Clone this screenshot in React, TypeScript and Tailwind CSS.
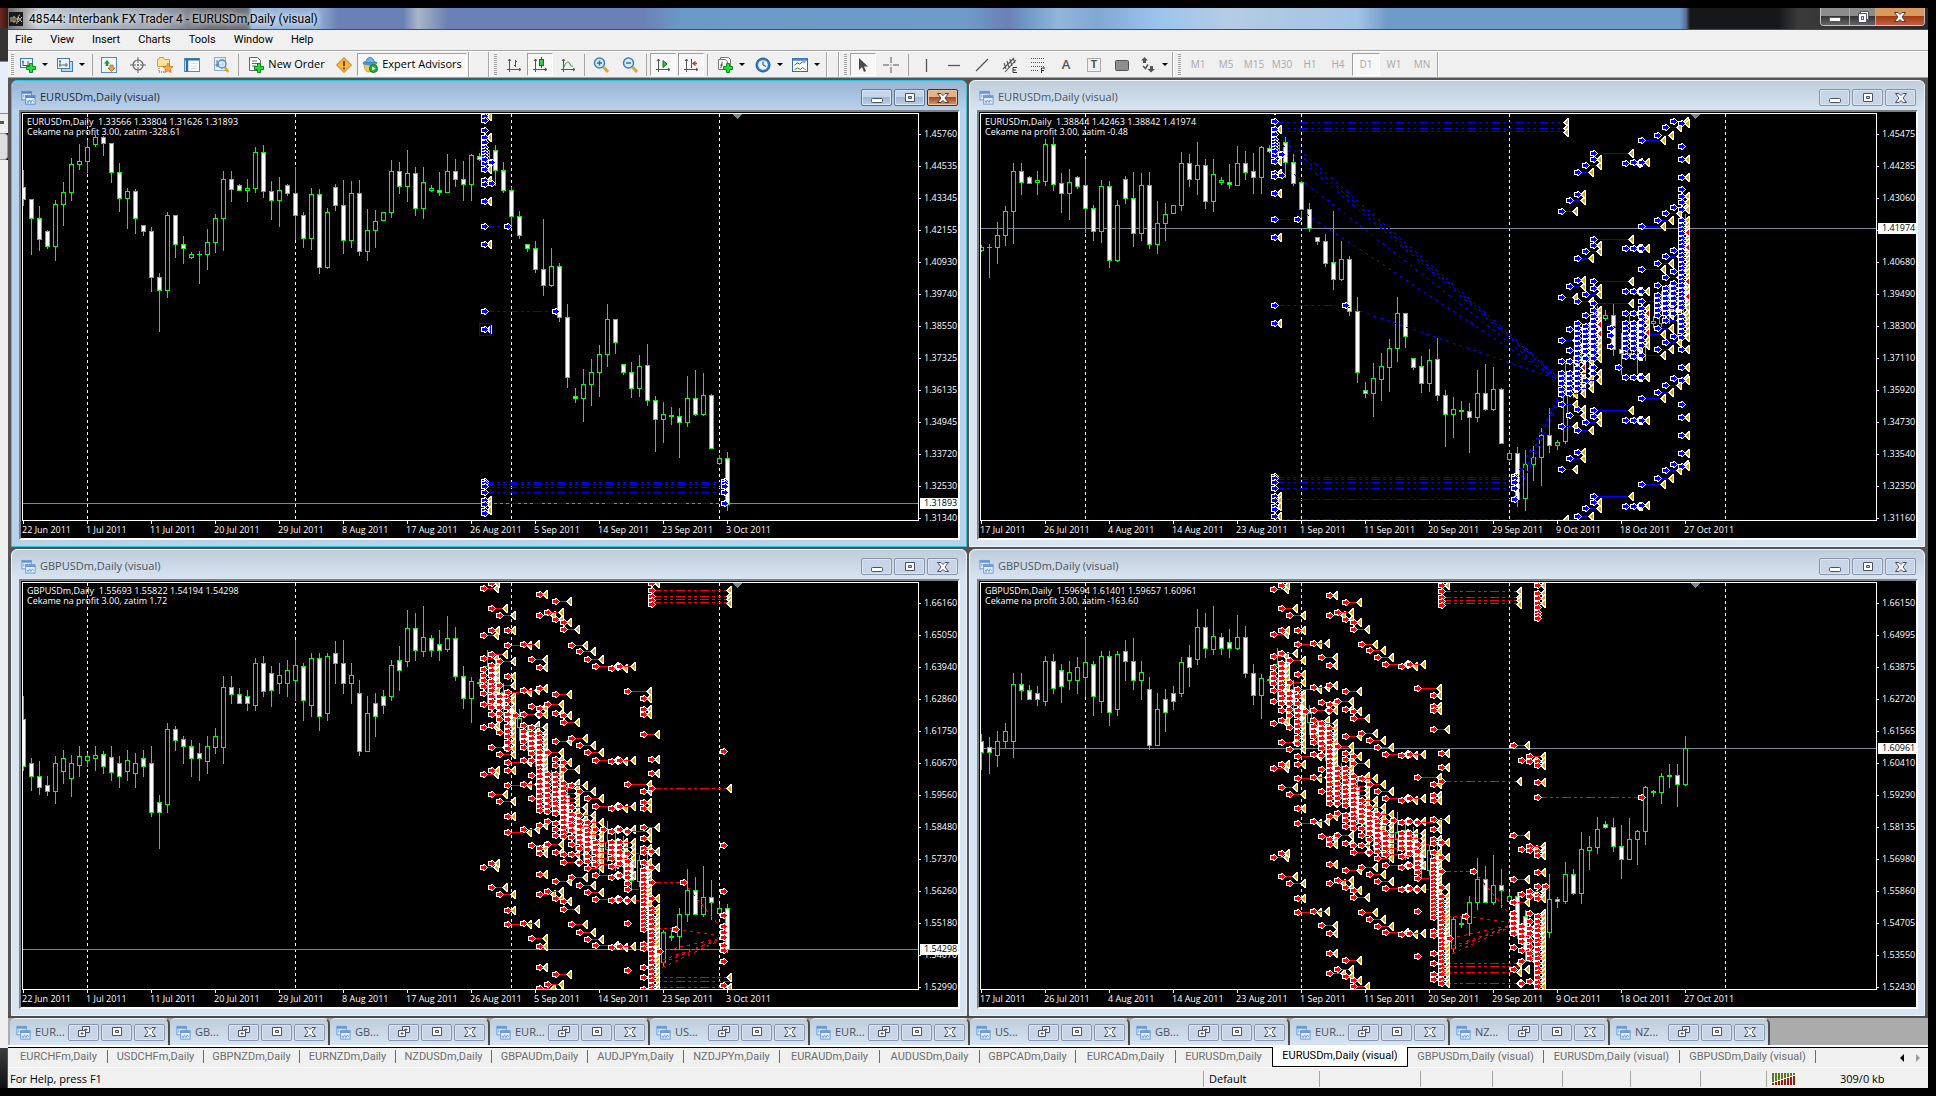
import React from "react";

type Bar = [high: number, top: number, bottom: number, low: number, filled: 0 | 1];
type Column = [x: number, ys: number[], gap: number];
type Segment = [x1: number, y1: number, x2: number, y2: number];

/* Series values are stored in thirds of a pixel. */
const SUB = 3;
const BAR_STEP = 24;

const EUR: Bar[] = [
  [180, 231, 269, 287, 1], [268, 268, 325, 434, 1], [289, 325, 389, 422, 1], [360, 364, 410, 416, 1],
  [270, 283, 410, 452, 0], [216, 247, 284, 345, 0], [144, 163, 248, 272, 0], [102, 154, 164, 177, 0],
  [90, 112, 155, 186, 0], [75, 82, 104, 110, 0], [78, 82, 101, 137, 1], [100, 100, 188, 218, 1],
  [159, 187, 266, 305, 1], [235, 244, 266, 356, 0], [237, 244, 325, 371, 1], [346, 346, 365, 377, 1],
  [351, 364, 503, 545, 1], [489, 502, 542, 665, 1], [306, 316, 542, 563, 0], [316, 316, 404, 443, 1],
  [379, 403, 416, 461, 1], [426, 433, 443, 446, 0], [424, 433, 433, 521, 0], [358, 397, 434, 479, 0],
  [312, 325, 398, 428, 0], [183, 208, 326, 422, 0], [183, 208, 239, 275, 1], [222, 226, 242, 242, 1],
  [207, 235, 241, 275, 0], [111, 127, 236, 248, 0], [105, 127, 245, 263, 1], [213, 244, 272, 329, 1],
  [201, 241, 272, 350, 0], [222, 226, 251, 257, 1], [171, 250, 317, 387, 1], [307, 316, 386, 413, 1],
  [235, 253, 386, 419, 0], [238, 253, 473, 491, 1], [294, 307, 473, 476, 0], [223, 232, 287, 302, 1],
  [210, 286, 392, 431, 1], [213, 250, 392, 413, 0], [210, 250, 425, 437, 1], [297, 361, 425, 452, 0],
  [301, 334, 362, 413, 0], [307, 307, 332, 332, 0], [150, 184, 308, 323, 0], [156, 184, 230, 251, 1],
  [120, 190, 230, 275, 0], [172, 190, 296, 317, 1], [171, 217, 296, 326, 0], [226, 235, 241, 245, 0],
  [186, 241, 247, 257, 1], [132, 184, 248, 248, 0], [148, 184, 209, 230, 1], [153, 208, 224, 272, 1],
  [132, 136, 224, 272, 0], [130, 139, 149, 152, 1], [118, 122, 155, 160, 0], [105, 121, 182, 226, 1],
  [157, 181, 242, 248, 1], [231, 241, 320, 345, 1], [303, 319, 377, 386, 1], [403, 403, 416, 425, 1],
  [393, 415, 479, 488, 1], [327, 478, 527, 557, 1], [414, 469, 527, 530, 0], [459, 469, 623, 635, 1],
  [582, 622, 803, 833, 1], [834, 858, 865, 878, 1], [777, 823, 866, 935, 0], [747, 787, 824, 887, 0],
  [706, 733, 788, 860, 0], [582, 628, 734, 770, 0], [628, 628, 698, 731, 1], [763, 763, 788, 794, 1],
  [756, 787, 836, 863, 1], [735, 769, 836, 860, 0], [702, 766, 872, 887, 1], [858, 871, 929, 1025, 1],
  [877, 913, 929, 998, 0], [891, 916, 919, 944, 0], [895, 919, 938, 1043, 1], [798, 865, 938, 950, 0],
  [780, 865, 914, 917, 1], [789, 856, 914, 917, 0], [853, 856, 1016, 1016, 1], [1036, 1045, 1061, 1064, 0],
  [1026, 1045, 1182, 1202, 1],
];

const EUR_OCT: Bar[] = [
  [1020, 1063, 1165, 1202, 0], [1010, 1043, 1063, 1110, 0], [955, 977, 1043, 1125, 0], [894, 976, 1007, 1028, 1],
  [992, 997, 1007, 1017, 0], [760, 850, 995, 1001, 0], [740, 790, 850, 862, 0], [700, 740, 790, 850, 0],
  [640, 700, 740, 770, 0], [590, 610, 700, 730, 0], [602, 616, 625, 631, 0], [582, 616, 718, 737, 1],
  [670, 718, 731, 794, 1], [618, 640, 731, 740, 0], [650, 660, 700, 791, 0], [610, 640, 700, 750, 0],
  [620, 635, 640, 652, 0], [545, 600, 640, 650, 0], [530, 560, 600, 640, 0], [560, 595, 607, 680, 1],
  [312, 355, 608, 640, 0],
];

const GBP: Bar[] = [
  [440, 509, 650, 660, 1], [625, 640, 680, 720, 1], [635, 680, 713, 732, 1], [680, 705, 725, 735, 1],
  [620, 640, 725, 760, 0], [600, 625, 665, 700, 0], [615, 640, 685, 740, 0], [590, 618, 645, 680, 0],
  [610, 618, 632, 650, 0], [590, 615, 625, 660, 0], [605, 612, 650, 670, 1], [590, 622, 668, 690, 1],
  [620, 640, 680, 712, 1], [600, 630, 665, 690, 0], [610, 640, 670, 712, 0], [600, 625, 650, 680, 1],
  [590, 640, 787, 800, 1], [735, 757, 787, 895, 1], [520, 538, 762, 787, 0], [530, 538, 570, 600, 1],
  [560, 568, 590, 640, 1], [570, 590, 625, 680, 1], [580, 610, 625, 690, 1], [560, 590, 635, 670, 0],
  [535, 560, 592, 610, 0], [380, 412, 592, 640, 0], [380, 412, 432, 460, 1], [415, 432, 460, 460, 1],
  [420, 440, 460, 480, 1], [325, 340, 465, 480, 0], [320, 340, 425, 440, 1], [350, 370, 420, 470, 1],
  [340, 375, 400, 430, 0], [330, 360, 400, 440, 0], [270, 345, 390, 450, 0], [340, 350, 450, 510, 1],
  [310, 325, 465, 500, 0], [310, 325, 500, 540, 1], [310, 320, 490, 510, 0], [275, 310, 340, 400, 1],
  [270, 340, 400, 430, 1], [340, 375, 400, 460, 0], [390, 430, 604, 615, 1], [440, 490, 604, 604, 0],
  [430, 460, 500, 560, 1], [420, 440, 465, 490, 1], [330, 345, 440, 450, 0], [290, 330, 360, 420, 1],
  [180, 235, 335, 350, 0], [190, 235, 300, 330, 1], [170, 262, 305, 320, 0], [255, 265, 300, 320, 1],
  [240, 283, 300, 330, 1], [198, 265, 299, 303, 0], [231, 265, 380, 392, 1], [350, 379, 446, 474, 1],
  [381, 394, 446, 518, 0], [388, 396, 399, 410, 0], [300, 350, 398, 460, 0], [330, 350, 400, 470, 1],
  [400, 428, 470, 500, 1], [460, 470, 530, 560, 1], [478, 505, 532, 570, 0], [530, 540, 570, 600, 1],
  [530, 560, 600, 650, 1], [570, 600, 720, 760, 1], [660, 700, 730, 770, 0], [650, 720, 750, 790, 1],
  [700, 735, 830, 850, 1], [800, 830, 850, 900, 1], [820, 835, 880, 930, 1], [830, 850, 900, 950, 1],
  [860, 890, 930, 970, 1], [813, 877, 898, 935, 0], [840, 870, 920, 960, 1], [860, 900, 940, 980, 1],
  [915, 940, 990, 1020, 1], [915, 932, 995, 1010, 0], [910, 945, 1080, 1200, 1], [1100, 1180, 1240, 1280, 1],
  [1142, 1147, 1238, 1248, 0], [1140, 1159, 1162, 1172, 0], [1075, 1093, 1160, 1198, 0], [957, 1021, 1094, 1115, 0],
  [981, 1021, 1094, 1094, 1], [948, 1042, 1094, 1100, 0], [990, 1042, 1057, 1109, 1], [1062, 1076, 1090, 1090, 0],
  [1062, 1075, 1198, 1208, 1],
];

const GBP_OCT: Bar[] = [
  [1080, 1100, 1200, 1230, 1], [1150, 1160, 1200, 1230, 0], [1090, 1127, 1160, 1200, 0], [972, 1048, 1148, 1163, 0],
  [1042, 1048, 1054, 1073, 1], [936, 973, 1055, 1060, 0], [957, 973, 1031, 1034, 1], [846, 898, 1031, 1061, 0],
  [858, 892, 902, 959, 0], [801, 838, 892, 911, 0], [813, 823, 832, 836, 1], [804, 832, 890, 905, 1],
  [825, 889, 929, 986, 1], [804, 868, 929, 929, 0], [840, 844, 868, 944, 0], [708, 712, 845, 884, 0],
  [720, 724, 727, 738, 0], [670, 679, 727, 761, 0], [642, 676, 679, 713, 0], [642, 676, 704, 770, 1],
  [558, 596, 704, 707, 0],
];

const range = (from: number, to: number, step: number) =>
  Array.from({ length: Math.floor((to - from) / step) + 1 }, (_, i) => from + i * step);

const scaleBars = (bars: Bar[], k: number, c: number): Bar[] =>
  bars.map(([h, t, b, l, f]) => [h * k + c, t * k + c, b * k + c, l * k + c, f]);
const moveColumns = (cols: Column[], dx: number, k = 1, c = 0): Column[] =>
  cols.map(([x, ys, gap]) => [x + dx, ys.map((y) => y * k + c), gap]);
const moveSegments = (segs: Segment[], dx: number, k = 1, c = 0): Segment[] =>
  segs.map(([x1, y1, x2, y2]) => [x1 + dx, y1 * k + c, x2 + dx, y2 * k + c]);

/* EURUSD orders. A gap of 0 is an entry with no exit mark. */
const EUR_ORDERS: Column[] = [
  [1386, [20, 82, 161, 178, 212, 274, 403, 658, 1172, 1183, 1201], 13],
  [1386, [30, 60, 98, 113, 122, 131, 140, 149, 222, 349, 604, 1113, 1120, 1130, 1147, 1210], 0],
  [1409, [157, 220], 0],
  [1457, [349], 0],
  [1601, [604], 0],
  [2106, [1113, 1120, 1130, 1147, 1180], 0],
];
const EUR_LINKS: Segment[] = [
  [1386, 349, 1457, 349], [1386, 604, 1601, 604], [1386, 1117, 2106, 1117], [1386, 1123, 2106, 1123],
  [1386, 1132, 2106, 1132], [1386, 1147, 2106, 1147], [1386, 1180, 2106, 1180],
];
const EUR_OCT_ORDERS: Column[] = moveColumns([
  [336, [304, 562, 691, 754, 790, 805, 820, 838, 853, 883, 949, 1078], 40],
  [360, [271, 529, 658, 721, 754, 790, 805, 820, 835, 850, 916, 1045], 40],
  [384, [187, 445, 574, 640, 670, 685, 700, 715, 730, 754, 775, 790, 805, 820, 835, 961, 1219], 40],
  [384, [253, 511, 655, 745, 898, 1027], 15],
  [408, [166, 424, 553, 616, 650, 665, 680, 695, 710, 725, 745, 811, 937, 1195], 40],
  [432, [148, 407, 535, 600, 620, 635, 650, 665, 680, 695, 710, 727, 745, 790, 919, 1177], 15],
  [432, [130, 388, 514, 580, 901, 1159], 112],
  [432, [772], 0],
  [508, [772], 0],
  [483, [655, 675, 709], 0],
  [528, [160, 415, 544, 610, 640, 655, 670, 685, 700, 715, 740, 802, 931, 1189], 38],
  [552, [157, 415, 544, 610, 640, 655, 670, 685, 700, 715, 740, 802, 931, 1189], 18],
  [576, [91, 349, 478, 574, 736, 865, 1123, 672], 64],
  [576, [157, 415, 544, 595, 610, 620, 637, 655, 690, 705, 802, 931, 1186], 16],
  [624, [76, 331, 460, 525, 555, 570, 585, 600, 615, 655, 718, 847, 1105], 40],
  [648, [52, 310, 439, 502, 535, 550, 565, 580, 595, 610, 630, 697, 826, 1081], 40],
  [672, [34, 292, 421, 484, 520, 535, 550, 565, 580, 610, 679, 805, 1063], 38],
  [696, [109, 238, 883], 0],
  [696, [40, 148, 202, 259, 277, 298, ...range(332, 604, 13), 618, 634, 650, 664, 682, 718, 772, 811, 922, 976, 1030, 1069], 15],
], 1407);
const EUR_OCT_EXITS: Column = [1757, [38, 56, 67, 1228], 0];
const EUR_OCT_LINKS: Segment[] = [
  [882, 38, 1757, 38], [882, 56, 1757, 56], [882, 64, 1757, 64], [882, 1228, 1757, 1228],
  [907, 75, 1731, 800], [907, 90, 1731, 803], [907, 105, 1731, 806],
  [907, 165, 1731, 810], [960, 300, 1731, 812], [1100, 588, 1731, 808],
  [1605, 1100, 1740, 850], [1605, 1120, 1745, 848], [1605, 1140, 1740, 845], [1605, 1165, 1740, 860], [1880, 640, 1930, 665],
];
/* Exits closed by stop, drawn in red over the entry columns. */
const EUR_OCT_STOPS: Column[] = moveColumns([
  [350, [823], 0], [375, [787], 0], [399, [706, 772], 0], [424, [682, 697], 0], [448, [643, 670], 0],
  [544, [676, 688], 0], [568, [672], 0], [592, [610, 668], 0], [640, [592], 0], [662, [568], 0], [687, [550], 0],
  [711, [368, 412, 514, 560], 0],
], 1407);

const GBP_ORDERS: Column[] = moveColumns([
  [103, [118, 253, 319, 352, 370, 384, 400, 421, 453, 519, 655, 922], 36],
  [127, [105, 240, 340, 355, 370, 385, 400, 412, 430, 445, 460, 480, 512, 643, 910], 14],
  [127, [175, 309, 577, 712, 979], 38],
  [151, [196, 330, 397, 430, 445, 460, 478, 497, 532, 597, 733, 999], 38],
  [175, [240, 373, 440, 460, 480, 497, 515, 530, 545, 562, 580, 643, 775, 1045], 14],
  [175, [283, 417, 619, 685, 820, 1087], 62],
  [199, [485], 0],
  [223, [280, 412, 481, 512, 530, 545, 560, 577, 613, 682, 814, 1084], 38],
  [247, [322, 457, 520, 535, 550, 565, 580, 595, 615, 658, 723, 859, 1126], 38],
  [271, [135, 346, 406, 463, 481, ...range(535, 767, 14), 800, 868, 883, 943, 1150, 1210], 14],
  [271, [196, 999, 1270], 38],
  [295, [187, 454, 590, 655, 670, 685, 700, 715, 730, 745, 760, 790, 856, 991, 1258], 38],
  [319, [157, 424, 559, 961, 1231], 38],
  [319, [208, 478, 610, 628, ...range(655, 775, 14), 795, 812, 829, 880, 1012, 1280], 14],
  [343, [217, 484, 620, 1021, 1290], 14],
  [343, [238, 505, 640, ...range(680, 843, 14), 885, 907, 1042, 1308], 38],
  [367, [283, 550, 685, 750, 770, 785, 800, 815, 835, 855, 886, 952, 1087], 38],
  [391, [301, 571, 704, 772, 790, 805, 820, 835, 850, 868, 907, 973, 1108], 38],
  [415, [322, 592, 724, 793, 815, 827, 840, 855, 870, 890, 905, 925, 994, 1129], 38],
  [439, [343, 613, 745, 814, 850, 865, 880, 895, 912, 946, 1015, 1147], 60],
  [463, [812], 0],
  [487, [349, 616, 751, 817, 850, 865, 880, 895, 918, 952, 1018, 1153], 38],
  [511, [343, 613, 745, 814, 850, 865, 880, 895, 910, 946, 1015, 1150], 38],
  [535, [415, 682, 817], 62],
  [535, [883, 905, 925, 940, 952, 967, 985, 1018, 1084, 1219], 0],
  [583, [436, 468, 480, 703, 736, 752, 838, 868, 880, 907, 930, ...range(946, 1110, 12), 1144, 1156, 1210, 1240, 1273, 1287], 14],
  [583, [538, 808], 38],
  [607, [105, 610, 652, 877, 922, 1012, 1099, ...range(1040, 1300, 13)], 14],
  [607, [124, 142, 153, 165, 694, 964], 0],
  [631, [1165], 0],
  [679, [1100], 0],
  [703, [964], 0],
], 777);
const GBP_EXITS: Column = [1615, [124, 142, 151, 162, 694, 1240, 1267, 1300], 0];
const GBP_LINKS: Segment[] = moveSegments([
  [607, 124, 838, 124], [607, 142, 838, 142], [607, 151, 838, 151], [607, 160, 838, 160],
  [607, 694, 838, 694], [607, 964, 703, 964], [607, 1099, 679, 1099], [607, 1240, 838, 1240],
  [607, 1249, 838, 1249], [607, 1267, 838, 1267], [607, 1300, 838, 1300],
  [679, 1100, 808, 1118], [703, 964, 808, 1090], [631, 1165, 808, 1126], [620, 1195, 808, 1128],
  [620, 1205, 808, 1130], [620, 1218, 808, 1132], [540, 883, 583, 883], [540, 985, 583, 985], [540, 1018, 583, 1018],
], 777);
const GBP_OCT_ORDERS: Column[] = moveColumns([
  [823, [586, 856, 988, 1057, 1258], 38],
  [823, [1090, 1105, 1120, 1135, 1150, 1192], 0],
  [847, [631, 898, 1033, 1130, 1145, 1160, 1175, 1200, 1234, 1300], 38],
  [871, [618, 634, 888, 901, 1024, 1040, 1090, 1115, 1135, 1150, 1170, 1190, 1210, 1225, 1295], 38],
  [895, [106, 130, 145, 160, 634, 645, 697, 904, 916, 967, 1035, 1045, ...range(1100, 1310, 14)], 14],
  [895, [172, 187, 196, 206, 742, 1009], 0],
  [919, [1009], 0],
  [1207, [742], 0],
], 777);

type ChartData = {
  id: string;
  symbol: string;
  quote: string;
  note: string;
  bars: Bar[];
  origin: number;
  months: number[];
  bid: number;
  price: string;
  prices: string[];
  dates: string[];
  orders: Column[];
  exits: Column[];
  stops?: Column[];
  links: Segment[];
  tone: "blue" | "red";
  selection?: { x: number; y: number };
};

const DATES_A = ["22 Jun 2011", "1 Jul 2011", "11 Jul 2011", "20 Jul 2011", "29 Jul 2011", "8 Aug 2011", "17 Aug 2011", "26 Aug 2011", "5 Sep 2011", "14 Sep 2011", "23 Sep 2011", "3 Oct 2011"];
const DATES_B = ["17 Jul 2011", "26 Jul 2011", "4 Aug 2011", "14 Aug 2011", "23 Aug 2011", "1 Sep 2011", "11 Sep 2011", "20 Sep 2011", "29 Sep 2011", "9 Oct 2011", "18 Oct 2011", "27 Oct 2011"];

const CHARTS: ChartData[] = [
  {
    id: "eur-a", symbol: "EURUSDm,Daily", quote: "1.33566 1.33804 1.31626 1.31893", note: "Cekame na profit 3.00, zatim -328.61",
    bars: EUR, origin: 12, months: [8, 34, 61, 87], bid: 1180, price: "1.31893",
    prices: ["1.45760", "1.44535", "1.43345", "1.42155", "1.40930", "1.39740", "1.38550", "1.37325", "1.36135", "1.34945", "1.33720", "1.32530", "1.31340"],
    dates: DATES_A, orders: EUR_ORDERS, exits: [], links: EUR_LINKS, tone: "blue", selection: { x: 1368, y: 640 },
  },
  {
    id: "eur-b", symbol: "EURUSDm,Daily", quote: "1.38844 1.42463 1.38842 1.41974", note: "Cekame na profit 3.00, zatim -0.48",
    bars: [...scaleBars(EUR.slice(21), 1.0105, -25), ...EUR_OCT], origin: 12, months: [13, 40, 66, 93], bid: 355, price: "1.41974",
    prices: ["1.45475", "1.44285", "1.43060", "", "1.40680", "1.39490", "1.38300", "1.37110", "1.35920", "1.34730", "1.33540", "1.32350", "1.31160"],
    dates: DATES_B, orders: [...moveColumns(EUR_ORDERS, -504, 1.0105, -25), [882, [1219], 13], ...EUR_OCT_ORDERS], exits: [EUR_OCT_EXITS],
    stops: EUR_OCT_STOPS,
    links: [...moveSegments(EUR_LINKS, -504, 1.0105, -25), ...EUR_OCT_LINKS], tone: "blue",
  },
  {
    id: "gbp-a", symbol: "GBPUSDm,Daily", quote: "1.55693 1.55822 1.54194 1.54298", note: "Cekame na profit 3.00, zatim 1.72",
    bars: GBP, origin: 99, months: [8, 34, 61, 87], bid: 1198, price: "1.54298",
    prices: ["1.66160", "1.65050", "1.63940", "1.62860", "1.61750", "1.60670", "1.59560", "1.58480", "1.57370", "1.56260", "1.55180", "1.54070", "1.52990"],
    dates: DATES_A,
    orders: [...moveColumns(GBP_ORDERS, 504, 1.0417, -8), [2104, [604, 886, 1024, 1096, 1130, 1147, 1162, 1185, 1201, 1234, 1306], 0]],
    exits: moveColumns([GBP_EXITS], 504, 1.0417, -8), links: moveSegments(GBP_LINKS, 504, 1.0417, -8), tone: "red",
  },
  {
    id: "gbp-b", symbol: "GBPUSDm,Daily", quote: "1.59694 1.61401 1.59657 1.60961", note: "Cekame na profit 3.00, zatim -163.60",
    bars: [...scaleBars(GBP.slice(21), 0.96, 7), ...GBP_OCT], origin: 99, months: [13, 40, 66, 93], bid: 596, price: "1.60961",
    prices: ["1.66150", "1.64995", "1.63875", "1.62720", "1.61565", "1.60410", "1.59290", "1.58135", "1.56980", "1.55860", "1.54705", "1.53550", "1.52430"],
    dates: DATES_B, orders: [...GBP_ORDERS, ...GBP_OCT_ORDERS], exits: [GBP_EXITS],
    links: [...GBP_LINKS, [1672, 742, 1984, 742]], tone: "red",
  },
];

const ExitMark = ({ x, y, fill = "#daa520" }: { x: number; y: number; fill?: string }) => (
  <path
    transform={`translate(${x} ${y})`}
    d="M-1.5 .5 2-3V4Z"
    fill={fill}
    stroke="#fff"
    strokeWidth={2}
    paintOrder="stroke"
    strokeLinejoin="round"
  />
);

const Plot = ({ chart }: { chart: ChartData }) => {
  const px = (v: number) => Math.floor(v / SUB);
  const y = (v: number) => px(v - chart.origin);
  const color = chart.tone === "blue" ? "#0000ff" : "#ff0000";
  return (
    <svg className="block h-[406px] w-full" shapeRendering="crispEdges" role="img" aria-label={`${chart.symbol} candlestick chart`}>
      {chart.months.map((m) => (
        <line key={m} x1={m * 8 + 0.5} x2={m * 8 + 0.5} y1={0} y2={406} stroke="#fff" strokeDasharray="3 3" />
      ))}
      <rect x={0} y={y(chart.bid)} width="100%" height={1} fill="#778899" />
      {chart.bars.map(([h, t, b, l, filled], i) => {
        const x = (i * BAR_STEP) / SUB;
        const top = y(t);
        const height = y(b) - top + 1;
        return (
          <g key={i}>
            <rect x={x} y={y(h)} width={1} height={y(l) - y(h) + 1} fill="#00ff00" />
            <rect x={x - 2} y={top} width={5} height={height} fill="#00ff00" />
            {height > 2 && <rect x={x - 1} y={top + 1} width={3} height={height - 2} fill={filled ? "#fff" : "#000"} />}
          </g>
        );
      })}
      {chart.links.map(([x1, y1, x2, y2], i) => (
        <line key={i} x1={px(x1)} y1={y(y1) + 0.5} x2={px(x2)} y2={y(y2) + 0.5} stroke={color} strokeDasharray={y1 === y2 ? "9 3 3 3 3 3" : "3 4"} />
      ))}
      {chart.orders.map(([x, ys, gap], i) => (
        <g key={i}>
          {gap > 15 && ys.map((v, k) => <rect key={k} x={px(x)} y={y(v)} width={px(gap)} height={1} fill={color} />)}
          {gap > 0 && ys.map((v, k) => <ExitMark key={k} x={px(x + gap)} y={y(v)} />)}
        </g>
      ))}
      {chart.exits.map(([x, ys], i) => (
        <g key={i}>{ys.map((v, k) => <ExitMark key={k} x={px(x)} y={y(v)} />)}</g>
      ))}
      {chart.stops?.map(([x, ys], i) => (
        <g key={i}>{ys.map((v, k) => <ExitMark key={k} x={px(x)} y={y(v)} fill="#ff0000" />)}</g>
      ))}
      {chart.orders.map(([x, ys], i) => (
        <g key={i}>
          {ys.map((v, k) => (
            <path
              key={k}
              transform={`translate(${px(x)} ${y(v)})`}
              d="M-3-1H0V-2L3 .5 0 3V2H-3Z"
              fill={color}
              stroke="#fff"
              strokeWidth={2}
              paintOrder="stroke"
              strokeLinejoin="round"
            />
          ))}
        </g>
      ))}
      {chart.selection && (
        <rect x={px(chart.selection.x) + 0.5} y={y(chart.selection.y) + 0.5} width={11} height={12} fill="none" stroke={color} />
      )}
      <path d="M710 0H719L714.500 5Z" fill="#778899" />
    </svg>
  );
};

const ChartIcon = ({ dim = false }: { dim?: boolean }) => (
  <svg viewBox="0 0 16 16" className={dim ? "size-[15px] shrink-0 opacity-80" : "size-[15px] shrink-0"} fill="none">
    <rect x="1" y="1.500" width="10" height="9" fill="#f4f9ff" stroke="#4c86d6" />
    <path d="M1 3h10" stroke="#4c86d6" strokeWidth="2" />
    <path d="M3 8V5m2 3V5.500M7 7V5m2 2V5" stroke="#4c86d6" />
    <rect x="5" y="6" width="10" height="9" fill="#f4f9ff" stroke="#4c86d6" />
    <path d="M5 7.500h10" stroke="#4c86d6" strokeWidth="2" />
    <path d="M6.500 11.500l1 2 1.500-3 1.500 3 1.500-3 1.500 2" stroke="#4c86d6" />
  </svg>
);

type Glyph = "min" | "max" | "restore" | "close" | "cascade";
const WindowGlyph = ({ kind, active = false }: { kind: Glyph; active?: boolean }) => (
  <svg viewBox="0 0 12 12" className="size-3" fill="#fff" stroke={active ? "#4f3a3a" : "#4a5263"}>
    {kind === "min" && <rect x=".5" y="6.500" width="11" height="4" rx="1" />}
    {kind === "max" && <path d="M1.500 1.500h9v8h-9zM4.500 4.500v2h3v-2z" fillRule="evenodd" />}
    {kind === "restore" && (
      <>
        <path d="M4.500.500h7v6h-7zM7 3v1h2V3z" fillRule="evenodd" />
        <path d="M.500 4.500h7v6h-7zM3 7v1h2V7z" fillRule="evenodd" />
      </>
    )}
    {kind === "cascade" && (
      <>
        <path d="M3.500.500h8v8h-8z" />
        <path d="M1.500 2.500h8v9h-8zM4.500 5.500v3h2v-3z" fillRule="evenodd" />
      </>
    )}
    {kind === "close" && <path d="M.500 1.500h3.500l2 2 2-2h3.500L8 6l3.500 4.500H8l-2-2-2 2H.500L4 6z" />}
  </svg>
);

const WindowButton = ({ kind, variant = "idle" }: { kind: Glyph; variant?: "idle" | "active" | "danger" }) => {
  const tone = {
    idle: "border-[#8694ad] bg-[#c8d5e6] shadow-[inset_0_0_0_1px_#dbe5f1]",
    active: "border-[#5f7393] bg-[linear-gradient(#c5d5ea_0_45%,#9fb8d6_50%,#b9cfe8)] shadow-[inset_0_0_0_1px_#dbe7f5]",
    danger: "border-[#4f2a26] bg-[linear-gradient(#e0b389_0_45%,#a8432c_50%,#d89a6c)] shadow-[inset_0_0_0_1px_#e8c6a4]",
  }[variant];
  return (
    <button type="button" aria-label={kind} className={`flex h-[17px] w-[31px] items-center justify-center rounded-[2px] border ${tone}`}>
      <WindowGlyph kind={kind} active={variant === "danger"} />
    </button>
  );
};

const ChartWindow = ({ chart, active = false }: { chart: ChartData; active?: boolean }) => (
  <section
    className={
      active
        ? "rounded-t-md border border-[#38c4e0] bg-[#b9d1ea] pr-[6px] pb-[6px] pl-[7px]"
        : "rounded-t-md border border-[#eef3f9] bg-[#d7e4f2] pr-[6px] pb-[6px] pl-[7px]"
    }
  >
    <header
      className={
        active
          ? "-mr-[6px] -ml-[7px] flex h-[29px] items-center rounded-t-md bg-[linear-gradient(#98b4d2,#b9d1ea)] pt-1 pr-2 pl-[9px] text-[#1c2b3a]"
          : "-mr-[6px] -ml-[7px] flex h-[29px] items-center rounded-t-md bg-[linear-gradient(#bfcddb,#d7e4f2)] pt-1 pr-2 pl-[9px] text-[#4a5561]"
      }
    >
      <ChartIcon dim={!active} />
      <h2 className="ml-1 grow text-[11px]">{chart.symbol} (visual)</h2>
      <div className="flex gap-[2px]">
        <WindowButton kind="min" variant={active ? "active" : "idle"} />
        <WindowButton kind="max" variant={active ? "active" : "idle"} />
        <WindowButton kind="close" variant={active ? "danger" : "idle"} />
      </div>
    </header>
    <div className="border-2 border-t-[#808080] border-r-white border-b-white border-l-[#808080] bg-black pt-px pl-px text-[9px] leading-[10px] text-white">
      <div className="flex h-[408px]">
        <div className="relative min-w-0 grow overflow-hidden border border-white">
          <Plot chart={chart} />
          <div className="absolute top-[3px] left-1 whitespace-pre">
            <p>{chart.symbol}{"  "}{chart.quote}</p>
            <p>{chart.note}</p>
          </div>
        </div>
        <div className="relative w-[39px] shrink-0 pt-[5px]">
          {chart.prices.map((p, i) => (
            <div key={i} className="flex h-8 items-center gap-[3px] before:h-px before:w-[2px] before:bg-white">{p}</div>
          ))}
          <div
            className="absolute right-0 left-px h-[11px] bg-white pl-1 text-black"
            style={{ top: Math.floor((chart.bid - chart.origin) / SUB) - 4 }}
          >
            {chart.price}
          </div>
        </div>
      </div>
      <div className="flex h-[17px]">
        {chart.dates.map((d) => (
          <div key={d} className="w-16 shrink-0 whitespace-nowrap before:mb-px before:ml-px before:block before:h-[3px] before:w-px before:bg-white">
            {d}
          </div>
        ))}
      </div>
    </div>
  </section>
);

const MINIMIZED = ["EUR...", "GB...", "GB...", "EUR...", "US...", "EUR...", "US...", "GB...", "EUR...", "NZ...", "NZ..."];

const Plus = ({ x = 7, y = 7 }: { x?: number; y?: number }) => (
  <path transform={`translate(${x} ${y})`} d="M3.500.500h3v3h3v3h-3v3h-3v-3h-3v-3h3z" fill="#22e03a" stroke="#0a8a18" />
);

const ICONS: Record<string, React.ReactNode> = {
  newChart: (<><rect x=".5" y="1.500" width="12" height="9" fill="#eaf4fd" stroke="#3f7db8" /><path d="M3 3.500v5h8M2 5h2M8 4v5" stroke="#555" fill="none" /><Plus x={6} y={6} /></>),
  profiles: (<><rect x="4.500" y="4.500" width="11" height="10" fill="#b9d7f3" stroke="#3f7db8" /><rect x=".5" y="1.500" width="12" height="10" fill="#eaf4fd" stroke="#3f7db8" /><path d="M3 3v7M2 8h9M9 6v4M2 4.500h2" stroke="#666" fill="none" /></>),
  market: (<><rect x=".5" y=".5" width="15" height="15" fill="#f2f8fe" stroke="#4f8cc6" /><path d="M3 6.500 6 3l3 3.500H7.300V9H4.700V6.500z" fill="#1a9a28" /><path d="M7 11h2V8h3v3h2l-3.500 3.500z" fill="#f0a03c" stroke="#9a5510" strokeWidth=".6" /></>),
  target: (<><circle cx="8" cy="8" r="5" fill="none" stroke="#666" strokeWidth="1.200" /><path d="M8 0v6M8 10v6M0 8h6M10 8h6M8 7v2M7 8h2" stroke="#666" /></>),
  folder: (<><path d="M.500 9.500v-7h1l1-2h4l1 2h5v7z" fill="#fbe29a" stroke="#d69c2c" /><path d="M2 11v4h5" stroke="#555" strokeDasharray="1 1" fill="none" /><path d="m11 6 1.500 3.200 3.500.400-2.500 2.400.700 3.500-3.200-1.700-3.200 1.700.700-3.500L6 9.600l3.500-.400z" fill="#f7a94a" stroke="#b96a1a" strokeWidth=".700" /></>),
  terminal: (<><rect x=".5" y="1.500" width="15" height="13" fill="#fff" stroke="#4f8cc6" /><path d="M1 2.500h14" stroke="#2f6ca8" strokeWidth="2" /><path d="M3 3v12" stroke="#2f6ca8" strokeWidth="2.500" /><path d="M7 6.500h6M7 9h6M7 11.500h6" stroke="#cde" /></>),
  tester: (<><rect x="1.500" y=".5" width="11" height="13" fill="#e6f0fa" stroke="#8aa8c8" /><path d="M4 3v7M2.500 8h8M10 4v5" stroke="#667" /><circle cx="9" cy="7" r="4" fill="#cfe6fb" fillOpacity=".8" stroke="#4b86c0" strokeWidth="1.300" /><path d="m12 10.500 3.500 4.500" stroke="#e0a030" strokeWidth="2.500" /></>),
  order: (<><path d="M1.500.500h8l3 3v10h-11z" fill="#fff" stroke="#666" /><path d="M4 4h5M4 6.500h6M4 9h4" stroke="#666" /><Plus x={6} y={6} /></>),
  alert: (<><path d="M8 .500 15.500 8 8 15.500.500 8z" fill="#f6b53c" stroke="#c07a18" /><path d="M8 4v5M8 10.500v2" stroke="#6a3a08" strokeWidth="1.800" /></>),
  expert: (<><path d="M2 7c0 5 2 8 5 8s5-3 5-8z" fill="#f4c65a" stroke="#b8861c" strokeWidth=".700" /><ellipse cx="8" cy="6" rx="7.500" ry="2.500" fill="#4a94cf" /><path d="M4 5.500C4 2 5.500.500 8 .500S12 2 12 5.500z" fill="#6db3e6" stroke="#3478b4" strokeWidth=".700" /><circle cx="11.500" cy="11.500" r="4" fill="#1fae35" stroke="#0b7a1c" /><path d="m10.300 9.500 3.200 2-3.200 2z" fill="#fff" /></>),
  bars: (<path d="M3.500 2v13M1 12.500h14M2 4l1.500-2L5 4M13 11l2 1.500-2 1.500M9.500 3v7M8 8.500h1.500M9.500 4.500H11" stroke="#555" fill="none" />),
  candles: (<><path d="M3.500 2v13M1 12.500h14M2 4l1.500-2L5 4M13 11l2 1.500-2 1.500" stroke="#555" fill="none" /><path d="M9.500 0v11" stroke="#0a7a18" /><rect x="7.500" y="2.500" width="4" height="6" fill="#2fd045" stroke="#0a7a18" /></>),
  line: (<><path d="M3.500 2v13M1 12.500h14M2 4l1.500-2L5 4M13 11l2 1.500-2 1.500" stroke="#555" fill="none" /><path d="M4 10c2-6 5-6 6-3s2 2 3 2" stroke="#2f8a3a" fill="none" /></>),
  zoomIn: (<><circle cx="6.500" cy="6" r="5" fill="#d6ebfc" stroke="#3d7fbe" strokeWidth="1.500" /><path d="M6.500 3.500v5M4 6h5" stroke="#2e6faf" strokeWidth="1.500" /><path d="m10.500 10 4.500 5" stroke="#dba63a" strokeWidth="3" /></>),
  zoomOut: (<><circle cx="6.500" cy="6" r="5" fill="#d6ebfc" stroke="#3d7fbe" strokeWidth="1.500" /><path d="M4 6h5" stroke="#2e6faf" strokeWidth="1.500" /><path d="m10.500 10 4.500 5" stroke="#dba63a" strokeWidth="3" /></>),
  scroll: (<><path d="M3.500 2v13M1 12.500h14M2 4l1.500-2L5 4M13 11l2 1.500-2 1.500" stroke="#555" fill="none" /><path d="M8 3.500 12 7l-4 3.500z" fill="#2fc045" stroke="#0a7a18" /></>),
  shift: (<><path d="M3.500 2v13M1 12.500h14M2 4l1.500-2L5 4M13 11l2 1.500-2 1.500M8.500 2v9" stroke="#555" fill="none" /><path d="M14 6.500h-4M12.500 4.500l-2.500 2 2.500 2" stroke="#c04010" fill="none" strokeWidth="1.300" /></>),
  indicators: (<><path d="M3.500.500h8l2 2v9h-10z" fill="#fff" stroke="#777" /><path d="M1.500 2.500h7l2 2v8h-9z" fill="#f4f4f4" stroke="#777" /><path d="M6 5c-2 0-1.500 6-2.500 6M3.500 8H6" stroke="#555" fill="none" /><Plus x={6} y={6} /></>),
  clock: (<><circle cx="8" cy="8" r="7" fill="#2f7fd6" stroke="#1b559c" /><circle cx="8" cy="8" r="4.800" fill="#eaf5ff" /><path d="M8 4.500V8l3 1.500" stroke="#333" fill="none" /></>),
  template: (<><rect x=".5" y="1.500" width="15" height="13" fill="#fff" stroke="#2f6ca8" /><path d="M1 2.500h14" stroke="#3d86cc" strokeWidth="2.500" /><path d="m2.500 8 3-2 2 1 3-2h3" stroke="#b03020" fill="none" /><path d="m2.500 12.500 3-1.500 3 1.500 2-2 3 2" stroke="#1f9a30" fill="none" /></>),
  cursor: (<path d="M4 1v12l3-3 2 5 2-1-2-4.500h4z" fill="#4a4a4a" />),
  cross: (<path d="M8 0v6M8 10v6M0 8h6M10 8h6M8 7.500v1" stroke="#555" />),
  vline: (<path d="M8.500 2v13" stroke="#555" strokeWidth="1.300" />),
  hline: (<path d="M2 8.500h12" stroke="#555" strokeWidth="1.300" />),
  trend: (<path d="M2 14 14 2" stroke="#555" strokeWidth="1.200" />),
  channel: (<><path d="M1 12 12 1M3 15 14 3M2 6l2 6M5 4l2 7M8 2l2 7M11 1l2 5" stroke="#555" strokeWidth="1.100" /><path d="M15 10.500h-4v5h4M11 13h3" stroke="#333" fill="none" /></>),
  fibo: (<><path d="M1 1.500h14M1 5.500h14M1 9.500h14M1 13.500h8" stroke="#555" strokeDasharray="1 1" /><path d="M11.500 16v-5H15M11.500 13.500H14" stroke="#333" fill="none" /></>),
  label: (<rect x="1.500" y="1.500" width="13" height="13" fill="none" stroke="#666" strokeDasharray="1 1" />),
  rect: (<rect x="1.500" y="3.500" width="13" height="10" rx="1" fill="#8e8e8e" stroke="#555" />),
  arrows: (<><path d="M4.500 0 8 3.500H6V6H3V3.500H1zM11 15.500 7.500 12H10V9h3v3h2z" fill="#555" /><path d="m3 9 2.500 2.500L8 7.500" stroke="#555" fill="none" strokeWidth="1.500" /></>),
};

const Icon = ({ name }: { name: string }) => <svg viewBox="0 0 16 16" className="size-4 shrink-0">{ICONS[name]}</svg>;
const Caret = () => <span className="ml-[6px] border-x-[3px] border-t-[3px] border-x-transparent border-t-black" />;
const Grip = () => <span className="mx-[3px] h-[22px] w-[3px] bg-[repeating-linear-gradient(#a5a5a5_0_1px,#f0f0f0_1px_2px)]" />;
const Divider = ({ className = "mx-[3px]" }: { className?: string }) => <span className={`h-[22px] w-px bg-[#a5a5a5] ${className}`} />;
const FullDivider = () => <span className="mx-px h-[25px] w-[2px] border-r border-white bg-[#a5a5a5]" />;

const Tool = ({ icon, label, width = "w-7", menu = false, pressed = false, children }: {
  icon?: string; label: string; width?: string; menu?: boolean; pressed?: boolean; children?: React.ReactNode;
}) => (
  <button
    type="button"
    aria-label={label}
    aria-pressed={pressed}
    className={`flex h-[23px] shrink-0 items-center justify-center ${width} ${
      pressed ? "border border-t-[#a0a0a0] border-r-white border-b-white border-l-[#a0a0a0] bg-[#f8f8f8]" : ""
    }`}
  >
    {icon && <Icon name={icon} />}
    {children}
    {menu && <Caret />}
  </button>
);

const PERIODS = ["M1", "M5", "M15", "M30", "H1", "H4", "D1", "W1", "MN"];

const Toolbar = () => (
  <div role="toolbar" className="flex h-[26px] items-center border-t border-white">
    <Grip />
    <Tool icon="newChart" label="New chart" width="w-[34px]" menu />
    <Tool icon="profiles" label="Profiles" width="w-[40px]" menu />
    <Divider className="mx-px" />
    <Tool icon="market" label="Market Watch" width="w-[30px]" />
    <Tool icon="target" label="Data Window" width="w-[27px]" />
    <Tool icon="folder" label="Navigator" width="w-[27px]" />
    <Tool icon="terminal" label="Terminal" />
    <Tool icon="tester" label="Strategy Tester" width="w-[29px]" />
    <Divider />
    <Tool icon="order" label="New Order" width="w-[89px]"><span className="ml-1">New Order</span></Tool>
    <Tool icon="alert" label="Alerts" width="w-[26px]" />
    <Tool icon="expert" label="Expert Advisors" width="w-[110px]" pressed><span className="ml-1">Expert Advisors</span></Tool>
    <FullDivider />
    <span className="w-4" />
    <FullDivider />
    <Grip />
    <Tool icon="bars" label="Bar Chart" width="w-[27px]" />
    <Tool icon="candles" label="Candlesticks" width="w-[26px]" pressed />
    <Tool icon="line" label="Line Chart" width="w-[30px]" />
    <Divider className="mx-px" />
    <Tool icon="zoomIn" label="Zoom In" width="w-[30px]" />
    <Tool icon="zoomOut" label="Zoom Out" width="w-[27px]" />
    <Divider />
    <Tool icon="scroll" label="Auto Scroll" width="w-[26px]" pressed />
    <span className="w-[2px]" />
    <Tool icon="shift" label="Chart Shift" width="w-[26px]" pressed />
    <Divider />
    <Tool icon="indicators" label="Indicators" width="w-[39px]" menu />
    <Tool icon="clock" label="Periodicity" width="w-[37px]" menu />
    <Tool icon="template" label="Templates" width="w-[38px]" menu />
    <FullDivider />
    <span className="w-2" />
    <FullDivider />
    <Grip />
    <Tool icon="cursor" label="Cursor" width="w-[26px]" pressed />
    <Tool icon="cross" label="Crosshair" width="w-[29px]" />
    <Divider />
    <Tool icon="vline" label="Vertical Line" />
    <Tool icon="hline" label="Horizontal Line" />
    <Tool icon="trend" label="Trendline" />
    <Tool icon="channel" label="Channel" />
    <Tool icon="fibo" label="Fibonacci" />
    <Tool label="Text" ><span className="text-[13px] font-semibold text-[#555]">A</span></Tool>
    <Tool label="Text Label">
      <span className="relative flex size-4 items-center justify-center">
        <span className="absolute inset-0"><Icon name="label" /></span>
        <span className="text-[11px] font-bold text-[#555]">T</span>
      </span>
    </Tool>
    <Tool icon="rect" label="Rectangle" />
    <Tool icon="arrows" label="Arrows" width="w-[35px]" menu />
    <FullDivider />
    <Grip />
    {PERIODS.map((p) => (
      <Tool key={p} label={p} pressed={p === "D1"}><span className="text-[10px] text-[#a8a8a8]">{p}</span></Tool>
    ))}
    <FullDivider />
  </div>
);

const TABS: [string, string][] = [
  ["EURCHFm,Daily", "w-[98px]"], ["USDCHFm,Daily", "w-24"], ["GBPNZDm,Daily", "w-24"], ["EURNZDm,Daily", "w-24"],
  ["NZDUSDm,Daily", "w-24"], ["GBPAUDm,Daily", "w-24"], ["AUDJPYm,Daily", "w-24"], ["NZDJPYm,Daily", "w-24"],
  ["EURAUDm,Daily", "w-[100px]"], ["AUDUSDm,Daily", "w-[100px]"], ["GBPCADm,Daily", "w-24"], ["EURCADm,Daily", "w-[100px]"],
  ["EURUSDm,Daily", "w-24"], ["EURUSDm,Daily (visual)", "w-[136px]"], ["GBPUSDm,Daily (visual)", "w-[136px]"],
  ["EURUSDm,Daily (visual)", "w-[136px]"], ["GBPUSDm,Daily (visual)", "w-[136px]"],
];
const ACTIVE_TAB = 13;

const STATUS_CELLS = ["w-[101px]", "w-[72px]", "w-[70px]", "w-[68px]", "w-[70px]", "w-[66px]"];

const Connection = () => (
  <svg className="h-3 w-6" shapeRendering="crispEdges" aria-label="Connection quality">
    {range(0, 7, 1).map((i) => (
      <g key={i}>
        <rect x={i * 3} y={0} width={2} height={9 - i} fill="#5b7a1c" />
        <rect x={i * 3} y={10 - i} width={2} height={2 + i} fill="#9a1c10" />
      </g>
    ))}
  </svg>
);

export default function App() {
  return (
    <div className="flex min-h-screen bg-black py-2 pr-2 font-['Open_Sans','Noto_Sans',sans-serif] text-[11px] text-black">
      <aside className="flex w-2 shrink-0 flex-col" aria-hidden="true">
        <div className="h-5 bg-[linear-gradient(90deg,#6b2a22,#3a1512)]" />
        <div className="h-[34px] border-b border-[#888] bg-[#333]" />
        <div className="h-[52px] border-b border-[#7c8aa0] bg-[#e6eefa]" />
        <div className="h-[19px] bg-[#eee] pt-[7px]"><div className="h-[3px] w-1 bg-[#555]" /></div>
        <div className="h-[27px] rounded-r border border-l-0 border-[#999] bg-[#ddd]" />
        <div className="grow bg-[#efefef]" />
        <div className="h-10 border-r border-[#555] bg-[linear-gradient(#3a3c40,#101114)]" />
      </aside>
      <main className="min-w-0 grow overflow-hidden bg-[#f0f0f0]">
        <header className="flex h-[22px] items-center border-b border-[#3f4f60] bg-[linear-gradient(90deg,#707070_0,#c6cdd3_30px,#a9b4bf_80px,#98a3b0_150px,#6d7078_200px,#6d7078_240px,#9ab8da_244px,#8fb0d8_310px,#6b80b5_330px,#6b80b5_395px,#a8b6c8_410px,#6b80b5_440px,#6b80b5_510px,#6b80b5_635px,#6a9bc6_675px,#6f9bc8_960px,#6b80b5_1000px,#6f9bc8_1020px,#93b5da_1050px,#7fa8d2_1090px,#9cc4ee_1150px,#b5cce4_1220px,#a2c2e6_1350px,#6f9bc8_1380px,#6f9bc8_1672px,#5a6f9c_1678px,#15171a_1682px,#15171a_1770px,#3a3a3a_1790px,#2a2a2a)] pr-[3px]">
          <svg viewBox="0 0 14 14" className="ml-px size-[14px]">
            <rect width="14" height="14" fill="#17191c" />
            <path d="M2 5v5M4 5v5M4 5h2v5H4M7 12c2-1 1-9 4-9M7 7h3M9 10l4-5M9 5l4 5" stroke="#d6c79a" fill="none" />
          </svg>
          <h1 className="ml-[6px] grow font-['Roboto',sans-serif] text-[12px] [text-shadow:0_0_6px_#fff,0_0_6px_#fff]">48544: Interbank FX Trader 4 - EURUSDm,Daily (visual)</h1>
          <div className="flex h-[18px] self-start overflow-hidden rounded-b border border-t-0 border-[#c4c4c4]">
            <button type="button" aria-label="Minimize" className="flex w-[29px] items-center justify-center border-r border-[#aaa] bg-[linear-gradient(#8c8c8c_0_45%,#343434_50%,#666)]"><WindowGlyph kind="min" /></button>
            <button type="button" aria-label="Restore" className="flex w-[26px] items-center justify-center border-r border-[#aaa] bg-[linear-gradient(#8c8c8c_0_45%,#343434_50%,#666)]"><WindowGlyph kind="cascade" /></button>
            <button type="button" aria-label="Close" className="flex w-[48px] items-center justify-center bg-[linear-gradient(#d99a60_0_45%,#a83a10_50%,#c0604a)]"><WindowGlyph kind="close" active /></button>
          </div>
        </header>
        <nav className="flex h-[21px] items-center gap-[18px] border-b border-[#a5a5a5] pl-[7px] font-['Roboto',sans-serif]">
          {["File", "View", "Insert", "Charts", "Tools", "Window", "Help"].map((m) => (
            <button key={m} type="button">{m}</button>
          ))}
        </nav>
        <Toolbar />
        <div className="border-t border-[#a5a5a5] bg-[#ababab]">
          <div className="grid grid-cols-2 gap-[2px] border-y-2 border-t-[#555] border-b-[#4d4a4a] bg-[#555] pr-[3px] pl-[3px]">
            {CHARTS.map((c, i) => <ChartWindow key={c.id} chart={c} active={i === 0} />)}
          </div>
          <div className="flex h-[27px] pl-[2px]">
            {MINIMIZED.map((name, i) => (
              <div key={i} className="flex w-40 shrink-0 items-center rounded-t-md border-t border-r-2 border-t-[#eef3f9] border-r-[#4d4d4d] bg-[linear-gradient(#bfcddb,#d7e4f2)] pr-[3px] pl-[6px] text-[#4a5561]">
                <ChartIcon dim />
                <span className="ml-[4px] grow">{name}</span>
                <div className="flex gap-[2px]">
                  <WindowButton kind="restore" />
                  <WindowButton kind="max" />
                  <WindowButton kind="close" />
                </div>
              </div>
            ))}
          </div>
        </div>
        <div className="flex h-[23px] items-start border-t-2 border-b border-t-white border-b-white">
          <div role="tablist" className="flex h-5 grow border-t border-black pl-[2px] font-['Roboto',sans-serif]">
            {TABS.map(([name, width], i) => (
              <button
                key={i}
                type="button"
                role="tab"
                aria-selected={i === ACTIVE_TAB}
                className={
                  i === ACTIVE_TAB
                    ? `-mt-px h-5 shrink-0 border border-t-0 border-black bg-white ${width}`
                    : `my-[2px] h-[13px] shrink-0 border-r leading-[13px] text-[#6d6d6d] ${i === ACTIVE_TAB - 1 ? "border-transparent" : "border-[#6d6d6d]"} ${width}`
                }
              >
                {name}
              </button>
            ))}
            <div className="ml-auto flex items-center gap-3 pr-2">
              <button type="button" aria-label="Scroll left" className="border-y-4 border-r-4 border-y-transparent border-r-black" />
              <button type="button" aria-label="Scroll right" className="border-y-4 border-l-4 border-y-transparent border-l-[#999]" />
            </div>
          </div>
        </div>
        <footer className="flex h-5 items-center pt-[2px] pl-[2px]">
          <span className="grow">For Help, press F1</span>
          <span className="h-4 w-[116px] border-l border-[#a5a5a5] pl-[5px] leading-4">Default</span>
          {STATUS_CELLS.map((w, i) => <span key={i} className={`h-4 border-l border-[#a5a5a5] ${w}`} />)}
          <span className="flex h-4 w-[162px] items-center border-l border-[#a5a5a5] pl-[5px]">
            <Connection />
            <span className="ml-[44px]">309/0 kb</span>
          </span>
        </footer>
      </main>
    </div>
  );
}
